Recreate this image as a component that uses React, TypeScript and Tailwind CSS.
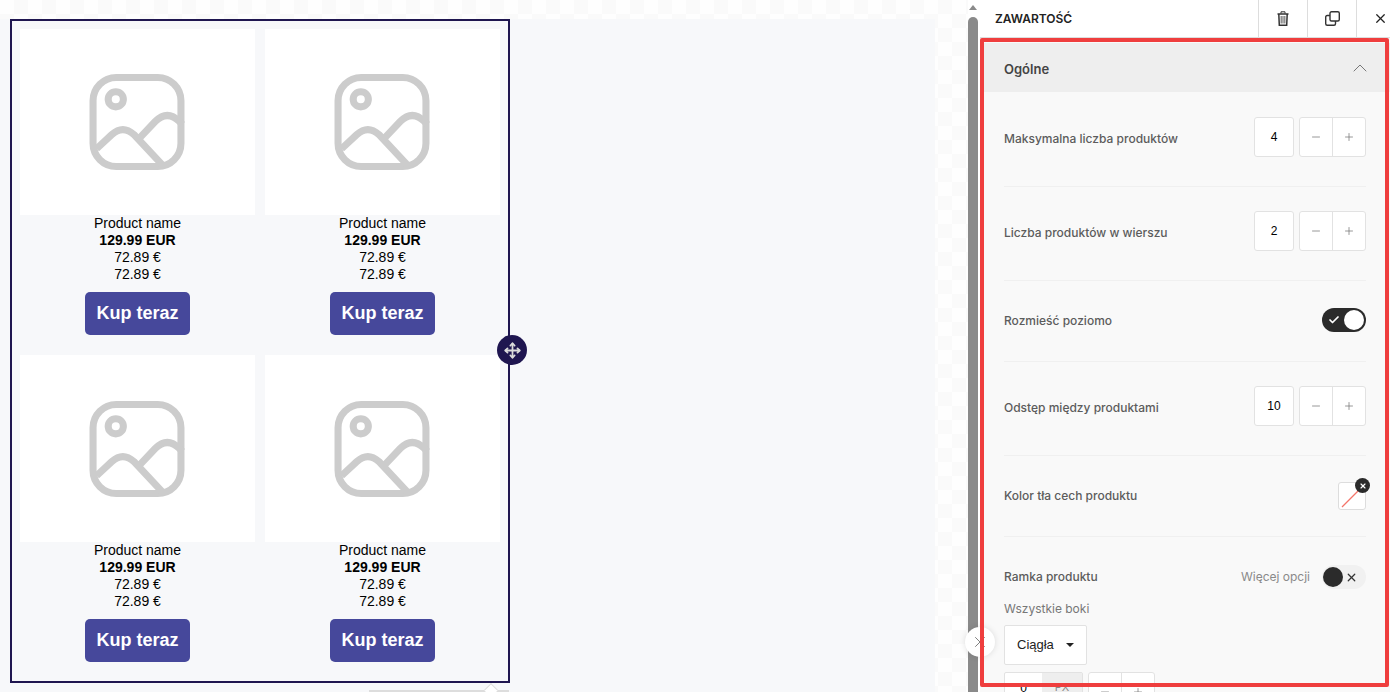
import { Check, ChevronUp, Minus, Move, Plus, X } from "lucide-react";

const ImagePlaceholder = () => (
  <svg className="-ml-[2px]" width="96" height="96" viewBox="0 0 94 95" fill="none" stroke="#cccccc" strokeWidth="7">
    <rect x="3.5" y="3.5" width="87" height="88" rx="23" />
    <circle cx="26" cy="25" r="7.5" />
    <path d="M7 74 L22 60 Q33 50 44 60 L72 90" />
    <path d="M49 64 L65 47 Q77 35 89 47 L92 50" />
  </svg>
);

const TrashIcon = () => (
  <svg width="12" height="15" viewBox="0 0 12 15" fill="none" stroke="#333333">
    <path d="M0.5 3 H11.5" strokeWidth="1.5" />
    <path d="M4 2.5 V0.8 H8 V2.5" strokeWidth="1" />
    <path d="M1.8 3 L2.3 14.2 H9.7 L10.2 3" strokeWidth="1.5" />
    <path d="M4.2 5 V12.5 M6 5 V12.5 M7.8 5 V12.5" stroke="#777777" strokeWidth="1.2" />
  </svg>
);

const CopyIcon = () => (
  <svg width="15" height="15" viewBox="0 0 15 15" fill="none" stroke="#333333" strokeWidth="1.4">
    <rect x="5" y="0.7" width="9.3" height="9.3" rx="1.5" />
    <path d="M5 4.5 H2.2 Q0.7 4.5 0.7 6 V12.8 Q0.7 14.3 2.2 14.3 H9 Q10.5 14.3 10.5 12.8 V10" />
  </svg>
);

const Product = () => (
  <div className="flex flex-col items-center text-center text-[14px] leading-[17px] text-black">
    <div className="flex h-[186.4px] w-full items-center justify-center bg-white">
      <ImagePlaceholder />
    </div>
    <div>Product name</div>
    <div className="font-bold">129.99 EUR</div>
    <div>72.89 €</div>
    <div>72.89 €</div>
    <button className="mt-[9px] mb-[10px] h-[43px] w-[105px] rounded-[5px] bg-[#46489b] text-[18px] font-bold text-white">
      Kup teraz
    </button>
  </div>
);

const Stepper = () => (
  <div className="flex h-10 w-[67px] rounded-[3px] border border-[#e2e2e2] bg-white text-[#777777]">
    <div className="flex flex-1 items-center justify-center border-r border-[#e2e2e2]">
      <Minus size={12} strokeWidth={1.5} />
    </div>
    <div className="flex flex-1 items-center justify-center">
      <Plus size={12} strokeWidth={1.5} />
    </div>
  </div>
);

const NumberRow = ({ label, value }: { label: string; value: string }) => (
  <div className="flex h-[94px] items-center justify-between border-b border-[#f0f0f0]">
    <span className="mb-[1px] text-[12px] font-medium text-[#5c5c5c]">{label}</span>
    <div className="mb-[5px] flex gap-[5px]">
      <div className="flex h-10 w-10 items-center justify-center rounded-[3px] border border-[#e2e2e2] bg-white font-['Liberation_Sans',sans-serif] text-[12px] text-black">
        {value}
      </div>
      <Stepper />
    </div>
  </div>
);

export default function App() {
  return (
    <div className="relative flex h-[692px] w-[1390px] overflow-hidden bg-white font-['Liberation_Sans',sans-serif]">
      <div className="flex w-[968px] shrink-0 flex-col bg-[repeating-conic-gradient(#fafafa_0_25%,#fefefe_0_50%)] bg-[length:28px_28px]">
        <div className="h-[19px] shrink-0" />
        <div className="flex-1 pr-[33px]">
          <div className="h-full bg-[#f7f8fa] pl-[10px]">
            <div className="relative h-[664px] w-[500px] border-2 border-[#1f1650] p-2">
              <div className="grid grid-cols-2 gap-x-[10px] gap-y-[10px]">
                <Product />
                <Product />
                <Product />
                <Product />
              </div>
              <div className="absolute top-[314px] -right-[19px] flex h-[30px] w-[30px] items-center justify-center rounded-full bg-[#1f1650] text-[#dcdcdc]">
                <Move size={17} strokeWidth={2.5} />
              </div>
            </div>
          </div>
        </div>
      </div>

      <div className="relative w-[12px] shrink-0 bg-white">
        <div className="absolute top-[5px] left-[1px] h-0 w-0 border-x-[4px] border-b-[5px] border-x-transparent border-b-[#8a8a8a]" />
        <div className="absolute top-[17px] bottom-0 left-0 w-[10px] rounded-t-[5px] bg-[#8a8a8a]" />
      </div>

      <div className="flex w-[410px] shrink-0 flex-col font-['Inter',sans-serif]">
        <div className="flex h-[38px] shrink-0 items-center border-b border-[#dddddd] bg-white">
          <span className="ml-[15px] flex-1 text-[12px] font-semibold text-[#222222]">ZAWARTOŚĆ</span>
          <div className="flex h-full w-[49px] items-center justify-center border-l border-[#dddddd]">
            <TrashIcon />
          </div>
          <div className="flex h-full w-[49px] items-center justify-center border-l border-[#dddddd]">
            <CopyIcon />
          </div>
          <div className="flex h-full w-[34px] items-center justify-end border-l border-[#dddddd] pr-[2px] text-[#222222]">
            <X size={15} strokeWidth={2} />
          </div>
        </div>

        <div className="flex-1 bg-[#f9f9f9] pt-[5px]">
          <div className="flex h-[49px] items-center justify-between bg-[#eeeeee] pr-[18px] pl-[24px]">
            <span className="mt-[4px] text-[13px] font-semibold text-[#444444]">Ogólne</span>
            <ChevronUp size={24} strokeWidth={1} className="text-[#777777]" />
          </div>
          <div className="mt-[1px] ml-[24px] w-[362px]">
            <NumberRow label="Maksymalna liczba produktów" value="4" />
            <NumberRow label="Liczba produktów w wierszu" value="2" />
            <div className="flex h-[81px] items-center justify-between border-b border-[#f0f0f0]">
              <span className="text-[12px] font-medium text-[#5c5c5c]">Rozmieść poziomo</span>
              <div className="mb-[2px] flex h-6 w-11 items-center justify-between rounded-full bg-[#2b2b2b] pr-[2px] pl-[6px]">
                <Check size={12} strokeWidth={3.5} className="text-white" />
                <div className="h-5 w-5 rounded-full bg-white" />
              </div>
            </div>
            <NumberRow label="Odstęp między produktami" value="10" />
            <div className="flex h-[81px] items-center justify-between border-b border-[#f0f0f0]">
              <span className="text-[12px] font-medium text-[#5c5c5c]">Kolor tła cech produktu</span>
              <div className="relative h-7 w-7 rounded-[3px] border border-[#dddddd] bg-white">
                <svg className="absolute inset-0" width="26" height="26" viewBox="0 0 26 26">
                  <line x1="3" y1="24" x2="24" y2="3" stroke="#f4756a" strokeWidth="1.2" />
                </svg>
                <div className="absolute -top-[5px] -right-[5px] flex h-[15px] w-[15px] items-center justify-center rounded-full bg-[#2b2b2b] text-white">
                  <X size={8} strokeWidth={3.5} />
                </div>
              </div>
            </div>
            <div className="mt-[28px] flex h-6 items-center">
              <span className="flex-1 text-[12px] font-medium text-[#5c5c5c]">Ramka produktu</span>
              <span className="mr-[12px] text-[12px] text-[#8a8a8a]">Więcej opcji</span>
              <div className="flex h-6 w-11 items-center rounded-full bg-[#f1f1f1] pl-[1px]">
                <div className="h-5 w-5 rounded-full bg-[#2b2b2b]" />
                <X size={13} strokeWidth={2.25} className="ml-[2px] text-[#333333]" />
              </div>
            </div>
            <div className="mt-[11px] text-[12px] text-[#777777]">Wszystkie boki</div>
            <div className="mt-[7px] flex h-10 w-[83px] items-center justify-between rounded-[2px] border border-[#e2e2e2] bg-white pr-3 pl-3 font-['Liberation_Sans',sans-serif] text-[13px] text-[#222222]">
              Ciągła
              <span className="h-0 w-0 border-x-[4px] border-t-[4px] border-x-transparent border-t-[#222222]" />
            </div>
            <div className="mt-[7px] flex gap-[5px]">
              <div className="flex h-10 w-[79px] rounded-[2px] border border-[#e2e2e2] bg-white">
                <div className="flex-1 pt-[6px] text-center font-['Liberation_Sans',sans-serif] text-[12px] text-black">0</div>
                <div className="w-10 bg-[#eeeeee] pt-[6px] text-center text-[11px] text-[#888888]">PX</div>
              </div>
              <Stepper />
            </div>
          </div>
        </div>
      </div>

      <div className="absolute top-[627px] left-[965px] flex h-[30px] w-[30px] items-center justify-center rounded-full bg-white text-[#777777] shadow-[0_0_6px_rgba(0,0,0,0.12)]">
        <X size={18} strokeWidth={1.25} />
      </div>

      <div className="pointer-events-none absolute top-[38px] left-[980px] h-[649px] w-[409px] rounded-[2px] border-[4px] border-[#ef3e3e]" />

      <div className="absolute top-[690px] left-[369px] h-[2px] w-[140px] bg-[#dddddd]" />
      <div className="absolute top-[685px] left-[486px] h-[10px] w-[10px] rotate-45 border-t border-l border-[#dddddd] bg-white" />
    </div>
  );
}
